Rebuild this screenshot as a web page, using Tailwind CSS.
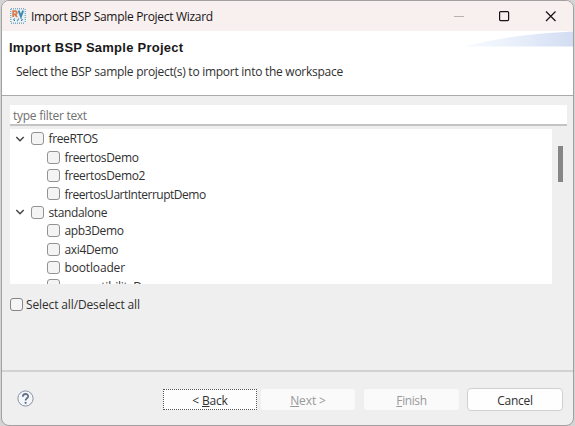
<!DOCTYPE html>
<html lang="en">
<head>
<meta charset="utf-8">
<title>Import BSP Sample Project Wizard</title>
<script src="https://cdn.jsdelivr.net/npm/@tailwindcss/browser@4"></script>
</head>
<body class="w-[575px] h-[426px] overflow-hidden bg-[#d4d4d4] pl-px pr-px font-['Open_Sans','Noto_Sans',sans-serif] text-[12px] text-[#303030]">
<div class="flex h-[426px] w-[573px] flex-col overflow-hidden rounded-[8px] border border-[#a3a0a1] bg-[#efefef]">
  <header class="flex h-[30px] shrink-0 items-center bg-[#f8efef] pl-[8px]">
    <svg class="size-[16px] shrink-0" viewBox="0 0 16 16" fill="none">
      <rect x="1" y="1" width="14" height="14" fill="#e6f0f5"/>
      <path d="M.7 1v14M15.3 1v14M1 .7h14M1 15.3h14" stroke="#7faac2" stroke-width="1.4" stroke-dasharray="1 1"/>
      <path d="M3.2 9V3.2h1.7q1.9 0 1.9 1.5T4.9 6.3H3.5M5.2 6.4 7 9" stroke="#dc7a4c" stroke-width="1.8"/>
      <path d="m8.7 2.6 2.2 5.9 2.2-5.9" stroke="#3c88b0" stroke-width="1.9"/>
      <path d="m5 10.6-1.5 1.1L5 12.8m3.7-2.4-1.4 2.8m3.7-2.6 1.5 1.1-1.5 1.1" stroke="#46799b"/>
    </svg>
    <h1 class="ml-[5px] pt-px whitespace-nowrap text-[12px] tracking-[-0.3px] text-[#171415]">Import BSP Sample Project Wizard</h1>
    <svg class="ml-auto mr-[16px] h-[14px] w-[104px] shrink-0" viewBox="0 0 104 14" fill="none">
      <path d="M1 7.5h10" stroke="#b9b1b1"/>
      <rect x="46.6" y="2.6" width="9" height="9" rx="1" stroke="#171415" stroke-width="1.2"/>
      <path d="m93 2.5 9.5 9.5m0-9.5L93 12" stroke="#171415" stroke-width="1.2"/>
    </svg>
  </header>
  <section class="flex h-[65px] shrink-0 border-b border-[#a9a9a9] bg-white">
    <div class="flex w-[400px] flex-col">
      <h2 class="mt-[8px] ml-[7px] whitespace-nowrap font-['Liberation_Sans',sans-serif] text-[13px] leading-[17px] tracking-[0.25px] font-bold text-[#191919]">Import BSP Sample Project</h2>
      <p class="mt-[7px] ml-[14px] whitespace-nowrap leading-[17px] tracking-[-0.27px]">Select the BSP sample project(s) to import into the workspace</p>
    </div>
    <svg class="ml-auto h-[16px] w-[110px]" viewBox="0 0 110 16">
      <defs><linearGradient id="swoosh"><stop stop-color="#f8faff"/><stop offset=".45" stop-color="#eaf0fb"/><stop offset="1" stop-color="#d2ddf2"/></linearGradient></defs>
      <path d="M0 15.5Q50 3 110 .5v15Z" fill="url(#swoosh)"/>
    </svg>
  </section>
  <main class="flex h-[274px] shrink-0 flex-col pt-[9px] pl-[8px]">
    <div class="flex h-[21px] w-[557px] shrink-0 items-center border-b-2 border-[#c4c4c4] bg-white pt-[2px] pl-[3px] text-[#707070]"><span class="tracking-[-0.27px]">type filter text</span></div>
    <div class="mt-[3px] flex h-[155px] w-[557px] shrink-0">
      <ul id="tree" class="h-[155px] w-[542px] overflow-hidden bg-white pt-[0.5px]"></ul>
      <div class="flex-1 pt-[17px] pl-[5.5px]"><div class="h-[36px] w-[5px] bg-[#868686]"></div></div>
    </div>
    <label class="mt-[11px] flex h-[18px] items-center"><span class="size-[13px] rounded-[3px] border border-[#858585] bg-[#f5f5f5]"></span><span class="ml-[3px] pt-[1.5px] tracking-[-0.13px]">Select all/Deselect all</span></label>
  </main>
  <footer class="flex flex-1 items-start border-t-2 border-[#d2d2d2] pt-[17px] pl-[15px]">
    <svg class="mt-px size-[17px]" viewBox="0 0 17 17" fill="none">
      <circle cx="8.5" cy="8.5" r="7.6" fill="#f4f6fa" stroke="#8490a4"/>
      <path d="M5.8 6.7C5.9 3 11.4 3.3 11.2 6.5 11.1 8.4 8.6 8.3 8.6 10.5" stroke="#657189" stroke-width="1.8"/>
      <circle cx="8.6" cy="12.8" r="1.1" fill="#657189"/>
    </svg>
    <div class="ml-[129px] flex gap-[4px]">
      <button class="flex h-[21px] w-[94px] items-center justify-center border border-dotted border-[#555] bg-[#fdfdfd] pt-[2px] tracking-[-0.2px]"><span>&lt; <u>B</u>ack</span></button>
      <button class="flex h-[21px] w-[94px] items-center justify-center rounded-[3px] bg-[#fafafa] pt-[2px] tracking-[-0.1px] text-[#999]"><span><u>N</u>ext &gt;</span></button>
    </div>
    <button class="ml-[9px] flex h-[21px] w-[95px] items-center justify-center rounded-[3px] bg-[#fafafa] pt-[2px] tracking-[-0.4px] text-[#999]"><span><u>F</u>inish</span></button>
    <button class="-mt-px ml-[8px] flex h-[23px] w-[96px] items-center justify-center rounded-[4px] border border-[#d0d0d0] bg-[#fefefe] pt-[2px] tracking-[-0.25px]">Cancel</button>
  </footer>
</div>
<script>
const rows = [[0,'freeRTOS'],[1,'freertosDemo'],[1,'freertosDemo2'],[1,'freertosUartInterruptDemo'],[0,'standalone'],[1,'apb3Demo'],[1,'axi4Demo'],[1,'bootloader'],[1,'compatibilityDemo']];
document.getElementById('tree').innerHTML = rows.map(([child,name]) =>
  `<li class="flex h-[18.4px] items-center ${child ? 'pl-[37px]' : 'pl-[5px]'}">` +
  (child ? '' : '<svg class="mr-[6px] size-[10px]" viewBox="0 0 10 10" fill="none"><path d="m1.3 3 3.7 3.7L8.7 3" stroke="#454545" stroke-width="1.5"/></svg>') +
  `<span class="size-[13px] shrink-0 rounded-[3px] border border-[#929292] bg-[#f4f4f4]"></span><span class="ml-[4.5px] pt-[1.5px] whitespace-nowrap ${name.length > 20 ? 'tracking-[-0.49px]' : name === 'compatibilityDemo' ? 'tracking-[-0.25px]' : name === 'bootloader' ? 'tracking-[-0.15px]' : child ? 'tracking-[-0.36px]' : 'tracking-[-0.38px]'}">${name}</span></li>`).join('');
</script>
</body>
</html>
